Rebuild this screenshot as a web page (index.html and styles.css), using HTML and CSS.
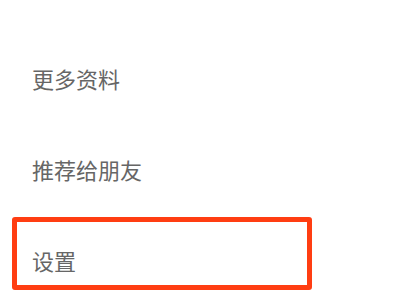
FILE: index.html
```html
<!DOCTYPE html>
<html lang="zh-CN">
<head>
    <meta charset="UTF-8">
    <title>设置</title>
    <link rel="stylesheet" href="styles.css">
</head>
<body>
<ul class="menu">
    <li class="item"><span>朋友权限</span></li>
    <li class="item"><span>更多资料</span></li>
    <li class="item"><span>推荐给朋友</span></li>
    <li class="item item-mark">
        <div class="mark"><span>设置</span></div>
    </li>
</ul>
</body>
</html>
```

FILE: styles.css
```css
* {
    margin: 0;
    padding: 0;
}

html, body {
    background: #ffffff;
    overflow: hidden;
}

ul, li {
    list-style: none;
}

.menu {
    margin-top: -58px;
    font-family: "Noto Sans CJK SC", "Noto Sans", sans-serif;
    font-size: 22px;
    color: #666666;
}

.item {
    height: 91px;
    line-height: 91px;
    padding-left: 32px;
}

/* 最后一项：红框标注 */
.item-mark {
    padding-left: 12px;
    padding-top: 2px;
    line-height: normal;
}

.mark {
    width: 275px;
    height: 37px;
    border: 5px solid #ff3d12;
    border-radius: 3px;
    padding: 26px 0 0 15px;
    line-height: 24px;
}
```
